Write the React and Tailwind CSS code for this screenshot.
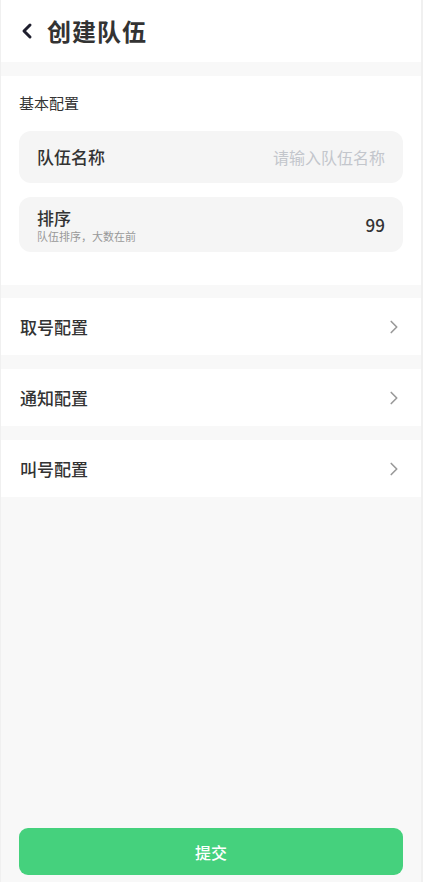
import { ChevronLeft, ChevronRight } from "lucide-react";

const font = { fontFamily: '"Noto Sans CJK SC", "Noto Sans", sans-serif' };

const NavRow = ({ title }) => (
    <div className="flex items-center justify-between bg-white h-[57px] pl-[19px] pr-[16px]">
        <span className="text-[17px] font-medium text-[#333]">{title}</span>
        <ChevronRight size={22} strokeWidth={1.8} className="text-[#999]" />
    </div>
);

const App = () => {
    return (
        <div className="flex h-[882px] w-full bg-[#f0f0f0]" style={font}>
            <div className="flex flex-col flex-1 ml-px mr-[2px] bg-[#f8f8f8]">
                {/* header */}
                <div className="flex items-center h-[62px] bg-white pl-[14px]">
                    <ChevronLeft size={24} strokeWidth={3} className="text-[#1f1f2e]" />
                    <h1 className="ml-[8px] text-[24px] font-bold text-[#333] tracking-[1px]">创建队伍</h1>
                </div>

                {/* basic config */}
                <div className="mt-[14px] bg-white px-[18px] pt-[15px] pb-[33px]">
                    <p className="text-[15px] text-[#333] leading-[24px]">基本配置</p>
                    <div className="mt-[16px] flex items-center justify-between h-[52px] rounded-[12px] bg-[#f5f5f5] px-[18px]">
                        <span className="text-[17px] font-medium text-[#333]">队伍名称</span>
                        <span className="text-[16px] text-[#c3c6cc]">请输入队伍名称</span>
                    </div>
                    <div className="mt-[14px] flex items-center justify-between h-[55px] rounded-[12px] bg-[#f5f5f5] px-[18px]">
                        <div className="flex flex-col">
                            <span className="text-[17px] font-medium text-[#333] leading-[22px]">排序</span>
                            <span className="text-[11px] text-[#999] leading-[14px]">队伍排序，大数在前</span>
                        </div>
                        <span className="text-[17px] font-medium text-[#333]">99</span>
                    </div>
                </div>

                <div className="mt-[13px] flex flex-col gap-[14px]">
                    <NavRow title="取号配置" />
                    <NavRow title="通知配置" />
                    <NavRow title="叫号配置" />
                </div>

                <div className="flex-1" />

                <div className="px-[18px] pb-[7px]">
                    <button className="w-full h-[47px] rounded-[9px] bg-[#45d17d] text-white text-[16px] font-medium">
                        提交
                    </button>
                </div>
            </div>
        </div>
    );
};

export default App;
